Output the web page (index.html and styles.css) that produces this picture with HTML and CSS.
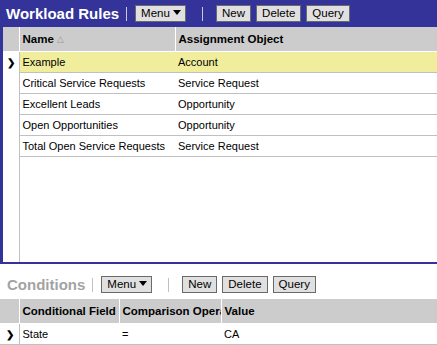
FILE: index.html
```html
<!DOCTYPE html>
<html lang="en">

<head>
    <meta charset="UTF-8">
    <title>Workload Rules</title>
    <link rel="stylesheet" href="styles.css">
</head>

<body>
    <div class="applet main">
        <div class="titlebar">
            <span class="title">Workload Rules</span>
            <span class="sep"></span>
            <button class="btn menu">Menu <span class="caret"></span></button>
            <span class="sep wide"></span>
            <button class="btn">New</button>
            <button class="btn">Delete</button>
            <button class="btn">Query</button>
        </div>
        <table class="list">
            <colgroup>
                <col class="c-sel">
                <col class="c-name">
                <col>
            </colgroup>
            <thead>
                <tr>
                    <th class="sel"></th>
                    <th>Name <span class="sort">&#9651;</span></th>
                    <th>Assignment Object</th>
                </tr>
            </thead>
            <tbody>
                <tr class="active">
                    <td class="sel"><span class="arrow">&#10095;</span></td>
                    <td>Example</td>
                    <td>Account</td>
                </tr>
                <tr>
                    <td class="sel"></td>
                    <td>Critical Service Requests</td>
                    <td>Service Request</td>
                </tr>
                <tr>
                    <td class="sel"></td>
                    <td>Excellent Leads</td>
                    <td>Opportunity</td>
                </tr>
                <tr>
                    <td class="sel"></td>
                    <td>Open Opportunities</td>
                    <td>Opportunity</td>
                </tr>
                <tr>
                    <td class="sel"></td>
                    <td>Total Open Service Requests</td>
                    <td>Service Request</td>
                </tr>
                <tr class="filler">
                    <td class="sel"></td>
                    <td></td>
                    <td></td>
                </tr>
            </tbody>
        </table>
    </div>

    <div class="applet sub">
        <div class="titlebar light">
            <span class="title">Conditions</span>
            <span class="sep"></span>
            <button class="btn menu">Menu <span class="caret"></span></button>
            <span class="sep wide"></span>
            <button class="btn">New</button>
            <button class="btn">Delete</button>
            <button class="btn">Query</button>
        </div>
        <table class="list">
            <colgroup>
                <col class="c-sel">
                <col class="c-field">
                <col class="c-op">
                <col>
            </colgroup>
            <thead>
                <tr>
                    <th class="sel"></th>
                    <th>Conditional Field</th>
                    <th class="clip">Comparison Operator</th>
                    <th>Value</th>
                </tr>
            </thead>
            <tbody>
                <tr>
                    <td class="sel"><span class="arrow">&#10095;</span></td>
                    <td>State</td>
                    <td>=</td>
                    <td>CA</td>
                </tr>
            </tbody>
        </table>
    </div>
</body>

</html>
```

FILE: styles.css
```css
* {
    margin: 0;
    padding: 0;
    box-sizing: border-box;
}

body {
    width: 437px;
    height: 345px;
    overflow: hidden;
    font-family: "Liberation Sans", Arial, sans-serif;
    font-size: 11px;
    color: #000;
    background: #fff;
}

.applet.main {
    border-left: 3px solid #333399;
    border-bottom: 2px solid #333399;
    height: 264px;
    display: flex;
    flex-direction: column;
}

.applet.main .titlebar {
    margin-left: -3px;
}

.titlebar {
    display: flex;
    align-items: center;
    height: 27px;
    padding-left: 6px;
    background: #333399;
}

.titlebar .title {
    color: #fff;
    font-size: 15px;
    font-weight: bold;
    margin-right: 7px;
}

.titlebar.light {
    background: #fff;
    height: 35px;
    padding-top: 6px;
    padding-left: 7px;
}

.titlebar.light .title {
    color: #a3a3a3;
}

.sep {
    width: 1px;
    height: 14px;
    background: #c8c8d8;
    margin-right: 8px;
}

.titlebar.light .sep {
    background: #c0c0c0;
}

.sep.wide {
    margin-left: 11px;
    margin-right: 13px;
}

.btn {
    font-family: "Liberation Sans", Arial, sans-serif;
    font-size: 11.5px;
    color: #000;
    background: #e0e0e0;
    border: 1px solid #6a6a6a;
    height: 17px;
    padding: 0 5px;
    margin-right: 5px;
    line-height: 15px;
}

.btn.menu {
    padding: 0 4px 0 5px;
}

.caret {
    display: inline-block;
    width: 0;
    height: 0;
    border-left: 4px solid transparent;
    border-right: 4px solid transparent;
    border-top: 5px solid #000;
    vertical-align: 2px;
}

.list {
    width: 100%;
    border-collapse: collapse;
    table-layout: fixed;
}

.main .list {
    flex: 1;
}

.c-sel {
    width: 16px;
}

.sub .c-sel {
    width: 19px;
}

.c-name {
    width: 156px;
}

.c-field {
    width: 100px;
}

.c-op {
    width: 102px;
}

th {
    background: #cccccc;
    height: 24px;
    text-align: left;
    font-size: 11.5px;
    font-weight: bold;
    padding-left: 3px;
    border-left: 1px solid #fff;
    border-bottom: 1px solid #fff;
    white-space: nowrap;
    overflow: hidden;
}

th.sel {
    border-left: none;
}

th .sort {
    color: #999;
    font-size: 9px;
    font-weight: normal;
    vertical-align: 1px;
}

td {
    height: 21px;
    padding-left: 3px;
    border-bottom: 1px solid #c0c0c0;
    white-space: nowrap;
    overflow: hidden;
}

td.sel {
    border-right: 1px solid #c0c0c0;
    padding-left: 4px;
}

.main td.sel {
    border-bottom: none;
}

.sub td.sel {
    padding-left: 6px;
}

.active td {
    background: #f0ee9c;
}

.active td.sel {
    background: #fff;
}

.arrow {
    font-size: 10px;
    font-weight: bold;
}

.filler td {
    height: auto;
    border-bottom: none;
}
```
